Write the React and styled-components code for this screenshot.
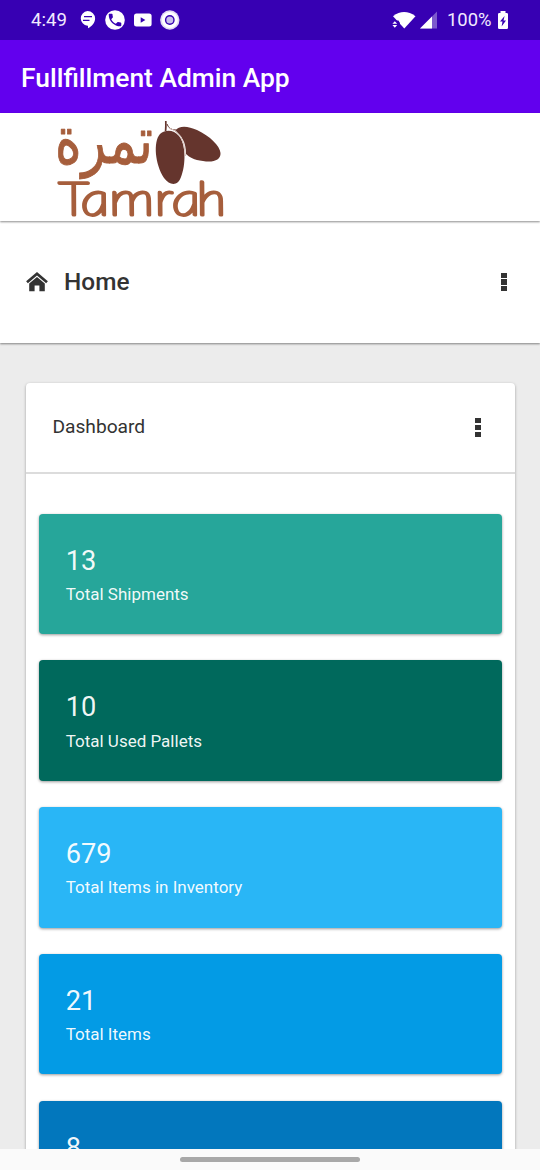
import React from 'react';
import styled, { createGlobalStyle } from 'styled-components';

const Global = createGlobalStyle`
  * { box-sizing: border-box; }
  body { margin: 0; background: #ececec; font-family: Roboto, "Liberation Sans", sans-serif; color: #333; }
`;

const Screen = styled.div`
  width: 540px;
  height: 1170px;
  display: flex;
  flex-direction: column;
  overflow: hidden;
  background: #ececec;
`;

const StatusBar = styled.header`
  flex: none;
  height: 40px;
  padding: 0 31px;
  display: flex;
  align-items: center;
  justify-content: space-between;
  background: #3700b3;
  color: #f1e9ff;
  font-size: 18.6px;
  line-height: 42px;
`;

const StatusGroup = styled.div`
  display: flex;
  align-items: center;
  height: 40px;
  svg { display: block; flex: none; }
`;

const Clock = styled.span`
  width: 48px;
`;

const Percent = styled.span`
  width: 50px;
  font-size: 18.4px;
  white-space: nowrap;
`;

const AppBar = styled.div`
  flex: none;
  height: 73px;
  padding: 2px 21px 0;
  display: flex;
  align-items: center;
  background: #6200ee;
  color: #fff;
  font-weight: 500;
`;

const AppTitle = styled.span`
  font-size: 26.4px;
`;

const LogoBar = styled.div`
  flex: none;
  position: relative;
  z-index: 2;
  height: 108px;
  padding-left: 40px;
  background: #fff;
  box-shadow: 0 1px 2px rgba(0, 0, 0, 0.45);
  svg { display: block; overflow: visible; }
`;

const HomeBar = styled.div`
  flex: none;
  position: relative;
  z-index: 1;
  height: 122px;
  padding: 0 33px 0 26px;
  display: flex;
  align-items: center;
  background: #fff;
  box-shadow: 0 1px 2px rgba(0, 0, 0, 0.45);
  color: #333;
`;

const HomeTitle = styled.h1`
  flex: 1;
  margin: 0 0 1px 16px;
  font-size: 24.4px;
  font-weight: 500;
  line-height: 30px;
`;

const Menu = styled.span`
  display: grid;
  gap: 1.5px;
  width: 6px;
`;

const MenuSquare = styled.i`
  height: 5.2px;
  background: #333;
`;

const Content = styled.main`
  flex: 1;
  min-height: 0;
  overflow: hidden;
  padding: 40px 25px 0 26.4px;
`;

const Card = styled.section`
  height: 1200px;
  border-radius: 4px;
  background: #fff;
  box-shadow: 0 1px 3px rgba(0, 0, 0, 0.35);
`;

const CardHeader = styled.div`
  height: 91px;
  padding: 0 34px 0 26px;
  display: flex;
  align-items: center;
  justify-content: space-between;
  border-bottom: 2px solid #dcdcdc;
`;

const CardTitle = styled.h2`
  margin: 0 0 3px;
  font-size: 19.2px;
  font-weight: 400;
  color: #333;
`;

const Tiles = styled.div`
  display: grid;
  gap: 26.4px;
  padding: 39.6px 13.5px 0 12.8px;
`;

const Tile = styled.article`
  height: 120.4px;
  padding: 30px 26.5px 0;
  border-radius: 4px;
  background: ${(p) => p.$color};
  box-shadow: 0 1px 3px rgba(0, 0, 0, 0.4);
  color: #fff;
`;

const Value = styled.div`
  font-size: 27.2px;
  line-height: 34px;
  color: rgba(255, 255, 255, 0.95);
`;

const Label = styled.div`
  margin-top: 5.2px;
  font-size: 17px;
  line-height: 22px;
  color: rgba(255, 255, 255, 0.95);
`;

const NavBar = styled.footer`
  flex: none;
  height: 21px;
  padding-top: 8px;
  background: #fafafa;
`;

const NavHandle = styled.div`
  width: 180px;
  height: 5px;
  margin: 0 auto;
  border-radius: 3px;
  background: #a8a8a8;
`;

const tiles = [
  { value: '13', label: 'Total Shipments', color: '#26a69a' },
  { value: '10', label: 'Total Used Pallets', color: '#00695c' },
  { value: '679', label: 'Total Items in Inventory', color: '#29b6f6' },
  { value: '21', label: 'Total Items', color: '#039be5' },
  { value: '8', color: '#0277bd' },
];

const NotificationIcons = () => (
  <svg width="104" height="24" viewBox="79 8 104 24" fill="#fff">
    <path d="M87.5 11a7.6 7.4 0 0 1 7.6 7.4c0 4.400-3.200 7.600-7.100 9.800v-2.500h-.5a7.6 7.400 0 0 1 0-14.700Z" />
    <path d="M84 16.700h8M83 20.300h6.500" stroke="#3700b3" strokeWidth="1.300" />
    <circle cx="115" cy="20" r="9.800" />
    <path
      transform="translate(106.600 11.600) scale(.7)"
      fill="#3700b3"
      d="M6.620 10.790c1.440 2.830 3.760 5.140 6.590 6.590l2.200-2.200c.27-.27.67-.36 1.020-.24 1.120.37 2.330.57 3.570.57.550 0 1 .45 1 1V20c0 .550-.45 1-1 1-9.390 0-17-7.610-17-17 0-.550.45-1 1-1h3.500c.550 0 1 .45 1 1 0 1.250.2 2.450.57 3.570.11.35.03.74-.25 1.020l-2.200 2.200z"
    />
    <rect x="134" y="13.600" width="17.600" height="13" rx="2.500" />
    <path d="M140.700 17.200v5.600l4.700-2.800Z" fill="#3700b3" />
    <circle cx="169.800" cy="20" r="9.700" opacity=".85" />
    <circle cx="169.800" cy="20" r="8" />
    <circle cx="169.800" cy="20" r="4.900" fill="#3700b3" />
    <circle cx="169.800" cy="20" r="3.500" fill="#c9c0ea" />
  </svg>
);

const SignalIcons = () => (
  <svg width="55" height="24" viewBox="392 8 55 24" fill="#fff">
    <path d="M393 16.200Q404 7.800 415.500 16.200L404.300 28.500Z" />
    <path d="M391.500 20.500h7l1.500 2.500-1.500 5h-7Z" fill="#3700b3" />
    <path d="m392.400 23.800 2.400-2.600 2.400 2.600Zm0 1.300 2.400 2.600 2.400-2.600Z" />
    <path d="M437 11.500V28.500H420Z" opacity=".35" />
    <path d="M432 16.500V28.500H420Z" />
  </svg>
);

const BatteryIcon = () => (
  <svg width="12" height="20" viewBox="0 0 12 20">
    <path d="M3.500 1h5v2h1.200q1.300 0 1.300 1.300v13.400q0 1.300-1.300 1.300H2.300Q1 19 1 17.700V4.300Q1 3 2.300 3h1.200Z" fill="#fff" />
    <path d="M7.600 6 3 11.600h2.500L4.600 16.500 9 10.400H6.500Z" fill="#3700b3" />
  </svg>
);

const HomeIcon = () => (
  <svg width="22" height="20" viewBox="0 0 22 20">
    <path d="M1 10.300 11 1.800 21 10.300" fill="none" stroke="#333" strokeWidth="2.700" />
    <path d="M3.200 11.400 11 5 18.800 11.400V19.300H13.400V13.400H8.600V19.300H3.200Z" fill="#333" />
  </svg>
);

const ArabicName = styled.text`
  font-family: "DejaVu Sans", sans-serif;
  font-size: 55px;
  fill: #a65e3c;
  stroke: #a65e3c;
  stroke-width: 0.8px;
  stroke-linejoin: round;
`;

const LatinName = styled.text`
  font-family: Lato, sans-serif;
  font-size: 46px;
  font-style: italic;
  font-weight: 100;
  fill: #a65e3c;
  stroke: #a65e3c;
  stroke-width: 3.2px;
  stroke-linecap: round;
  stroke-linejoin: round;
`;

const TamrahLogo = () => (
  <svg width="200" height="108" viewBox="0 0 200 108">
    <g transform="translate(0 49.500) scale(1 1.200)">
      <ArabicName x="113" y="0" textAnchor="end" textLength="98" lengthAdjust="spacingAndGlyphs">
        تمرة
      </ArabicName>
    </g>
    <g transform="translate(0 101.500) skewX(9) scale(1.25 1)">
      <LatinName x="16.800 34.400 57.200 93.600 107.200 127.200" y="0">
        Tamrah
      </LatinName>
    </g>
    <path d="M135 18C139 12 148 13 157 17C170 23 180 33 180.500 40C181 47 173 50 163 48C154 47 149 44 146 41C146 29 142 23 135 18Z" fill="#65352d" />
    <path d="M120 21C126 16 134 17 139 23C146 31 146 52 141 64C138 73 130 73 124 65C115 51 113 29 120 21Z" fill="#65352d" />
    <path d="M125.600 18Q126 14 125.800 8" fill="none" stroke="#65352d" strokeWidth="1.700" />
    <path d="M127 11Q129 17 136 17" fill="none" stroke="#65352d" strokeWidth="1" />
    <path d="M129 15Q144 18 145.500 43" fill="none" stroke="#d8c2bc" strokeWidth="1" />
  </svg>
);

const MoreMenu = () => (
  <Menu>
    <MenuSquare />
    <MenuSquare />
    <MenuSquare />
  </Menu>
);

export default function App() {
  return (
    <Screen>
      <Global />
      <StatusBar>
        <StatusGroup>
          <Clock>4:49</Clock>
          <NotificationIcons />
        </StatusGroup>
        <StatusGroup>
          <SignalIcons />
          <Percent>100%</Percent>
          <BatteryIcon />
        </StatusGroup>
      </StatusBar>
      <AppBar>
        <AppTitle>Fullfillment Admin App</AppTitle>
      </AppBar>
      <LogoBar>
        <TamrahLogo />
      </LogoBar>
      <HomeBar>
        <HomeIcon />
        <HomeTitle>Home</HomeTitle>
        <MoreMenu />
      </HomeBar>
      <Content>
        <Card>
          <CardHeader>
            <CardTitle>Dashboard</CardTitle>
            <MoreMenu />
          </CardHeader>
          <Tiles>
            {tiles.map(({ value, label, color }) => (
              <Tile key={color} $color={color}>
                <Value>{value}</Value>
                {label && <Label>{label}</Label>}
              </Tile>
            ))}
          </Tiles>
        </Card>
      </Content>
      <NavBar>
        <NavHandle />
      </NavBar>
    </Screen>
  );
}
